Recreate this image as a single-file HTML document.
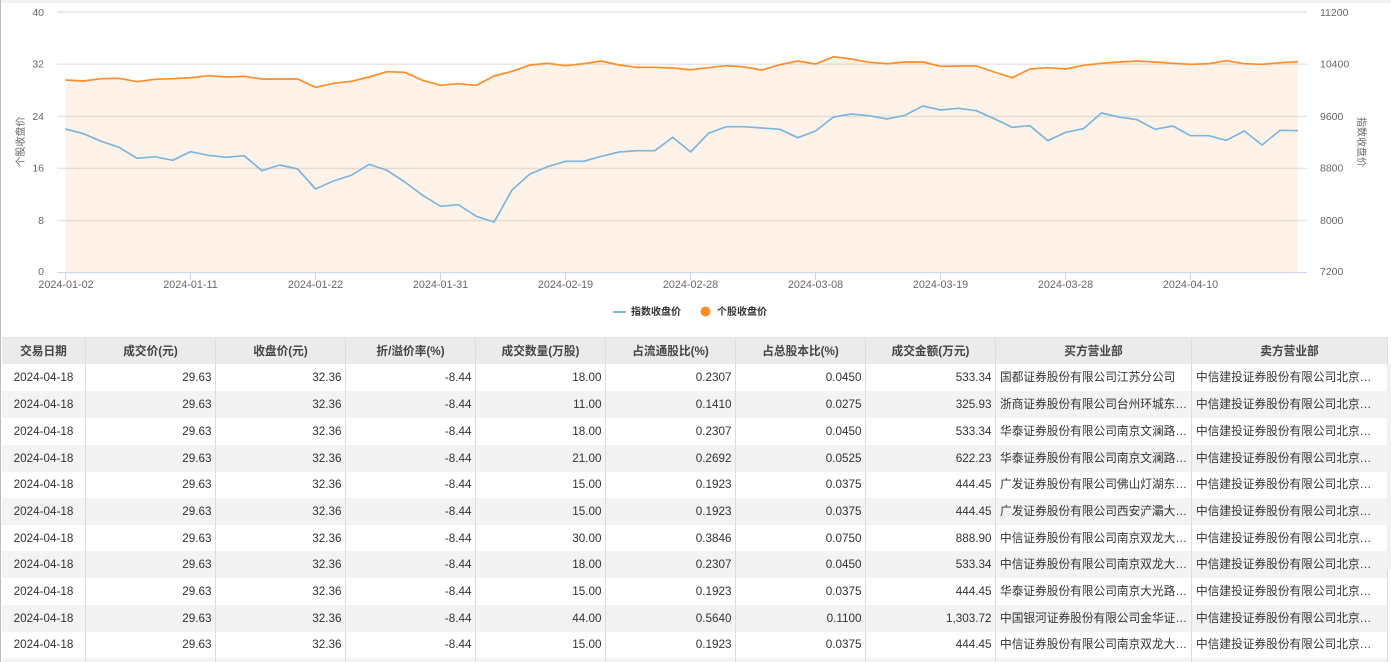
<!DOCTYPE html>
<html lang="zh-CN"><head><meta charset="utf-8"><title>大宗交易</title>
<style>
html,body{margin:0;padding:0;width:1391px;height:662px;overflow:hidden;background:#fff}
body{position:relative;font-family:"Liberation Sans","Noto Sans CJK SC",sans-serif;color:#333}
#top{position:absolute;left:0;top:0;width:1391px;height:3px;background:#f2f2f2}
#left{position:absolute;left:0;top:0;width:1px;height:662px;background:#bdbdbd}
svg{position:absolute;left:0;top:0}
svg text{font-family:"Liberation Sans","Noto Sans CJK SC",sans-serif}
.row{position:absolute;left:2px;width:1386px;display:grid;grid-template-columns:84px 130px 130px 130px 130px 130px 130px 130px 196px 196px;font-size:11.7px;color:#333}
.row>div{box-sizing:border-box;padding:0 3.5px;white-space:nowrap;overflow:hidden;text-align:right;border-right:1px solid #dcdcdc}
.row>div:first-child{text-align:center;padding:0}
.row>div:nth-child(9),.row>div:nth-child(10){text-align:left;padding-left:4px;padding-right:0}
.s{background:#f3f3f3}
.hd{background:#ebebeb;top:337px;height:27px;line-height:27px;font-weight:bold;color:#444;border-top:1px solid #e2e2e2;box-sizing:border-box}
.hd>div,.hd>div:nth-child(9),.hd>div:nth-child(10){text-align:center;padding:0}
.r{height:27px;line-height:28px}
#sb{position:absolute;left:1387px;top:364px;width:4px;height:206px;background:#f1f1f1;border-radius:0 0 2px 2px}
</style></head><body>
<div id="top"></div><div id="left"></div>
<svg width="1391" height="330" viewBox="0 0 1391 330">
<g stroke="#e4e4e4" stroke-width="1.4" fill="none">
<path d="M57 12H1307M57 64.2H1307M57 116.4H1307M57 168.4H1307M57 220.6H1307"/>
</g>
<polygon fill="#ff8d28" fill-opacity=".1" points="65.5,272 65.5,80 83.4,81 101.2,78.7 119.1,78.3 136.9,81.7 154.8,79.3 172.7,78.7 190.5,77.7 208.4,75.7 226.2,77 244.1,76.3 262,79 279.8,79 297.7,79 315.5,87.3 333.4,83.3 351.3,81.3 369.1,77 387,71.7 404.8,72.3 422.7,80.3 440.6,85.3 458.4,83.7 476.3,85.3 494.1,76 512,71.3 529.9,65 547.7,63.3 565.6,65.7 583.4,63.7 601.3,61 619.2,65 637,67.3 654.9,67.3 672.7,68 690.6,69.7 708.5,67.7 726.3,65.7 744.2,67 762,70 779.9,64.7 797.8,61 815.6,64 833.5,56.7 851.3,59 869.2,62.3 887.1,63.7 904.9,62 922.8,62 940.6,66.3 958.5,66 976.4,66 994.2,72 1012.1,77.7 1029.9,69 1047.8,67.7 1065.7,69 1083.5,65.3 1101.4,63.3 1119.2,62 1137.1,61 1155,62 1172.8,63.3 1190.7,64.3 1208.5,63.7 1226.4,60.7 1244.3,63.7 1262.1,64.3 1280,62.7 1297.9,61.7 1297.9,272"/>
<path d="M57 272.5H1307M65.5 272V280M190.5 272V280M315.5 272V280M440.5 272V280M565.5 272V280M690.5 272V280M815.5 272V280M940.5 272V280M1065.5 272V280M1190.5 272V280" stroke="#ccd6eb" stroke-width="1" fill="none"/>
<polyline fill="none" stroke="#7cb5de" stroke-width="1.7" stroke-linejoin="round" points="65.5,129 83.4,133.7 101.2,141.3 119.1,147.3 136.9,158.3 154.8,156.7 172.7,160.3 190.5,151.7 208.4,155.3 226.2,157.3 244.1,155.7 262,170.7 279.8,165 297.7,169 315.5,189 333.4,181 351.3,175.3 369.1,164.3 387,170.3 404.8,182 422.7,195.3 440.6,206.3 458.4,204.7 476.3,216.3 494.1,222 512,190 529.9,174 547.7,166.7 565.6,161.3 583.4,161.3 601.3,156.3 619.2,152 637,150.7 654.9,150.7 672.7,137.3 690.6,152 708.5,133.3 726.3,126.7 744.2,126.7 762,128 779.9,129.3 797.8,137.7 815.6,131 833.5,117 851.3,114 869.2,115.7 887.1,119 904.9,115.3 922.8,106 940.6,110 958.5,108.3 976.4,110.7 994.2,118.7 1012.1,127.3 1029.9,125.7 1047.8,140.7 1065.7,132.3 1083.5,128.7 1101.4,113 1119.2,117 1137.1,119.7 1155,129.3 1172.8,126 1190.7,135.7 1208.5,135.7 1226.4,140.3 1244.3,131 1262.1,145 1280,130.3 1297.9,130.7"/>
<polyline fill="none" stroke="#ff8d28" stroke-width="1.7" stroke-linejoin="round" points="65.5,80 83.4,81 101.2,78.7 119.1,78.3 136.9,81.7 154.8,79.3 172.7,78.7 190.5,77.7 208.4,75.7 226.2,77 244.1,76.3 262,79 279.8,79 297.7,79 315.5,87.3 333.4,83.3 351.3,81.3 369.1,77 387,71.7 404.8,72.3 422.7,80.3 440.6,85.3 458.4,83.7 476.3,85.3 494.1,76 512,71.3 529.9,65 547.7,63.3 565.6,65.7 583.4,63.7 601.3,61 619.2,65 637,67.3 654.9,67.3 672.7,68 690.6,69.7 708.5,67.7 726.3,65.7 744.2,67 762,70 779.9,64.7 797.8,61 815.6,64 833.5,56.7 851.3,59 869.2,62.3 887.1,63.7 904.9,62 922.8,62 940.6,66.3 958.5,66 976.4,66 994.2,72 1012.1,77.7 1029.9,69 1047.8,67.7 1065.7,69 1083.5,65.3 1101.4,63.3 1119.2,62 1137.1,61 1155,62 1172.8,63.3 1190.7,64.3 1208.5,63.7 1226.4,60.7 1244.3,63.7 1262.1,64.3 1280,62.7 1297.9,61.7"/>
<g font-size="10.5" fill="#666" text-anchor="end">
<text x="44" y="16">40</text><text x="44" y="67.5">32</text><text x="44" y="120">24</text><text x="44" y="171.5">16</text><text x="44" y="224">8</text><text x="44" y="275">0</text>
</g>
<g font-size="10.5" fill="#666">
<text x="1320" y="16">11200</text><text x="1320" y="67.5">10400</text><text x="1320" y="120">9600</text><text x="1320" y="171.5">8800</text><text x="1320" y="224">8000</text><text x="1320" y="275">7200</text>
</g>
<g font-size="10.8" fill="#666" text-anchor="middle">
<text x="66" y="288">2024-01-02</text><text x="190.5" y="288">2024-01-11</text><text x="315.5" y="288">2024-01-22</text><text x="440.5" y="288">2024-01-31</text><text x="565.5" y="288">2024-02-19</text><text x="690.5" y="288">2024-02-28</text><text x="815.5" y="288">2024-03-08</text><text x="940.5" y="288">2024-03-19</text><text x="1065.5" y="288">2024-03-28</text><text x="1190.5" y="288">2024-04-10</text>
</g>
<text font-size="10" fill="#666" text-anchor="middle" transform="translate(24 141.5) rotate(-90)">个股收盘价</text>
<text font-size="10" fill="#666" text-anchor="middle" transform="translate(1358 142) rotate(90)">指数收盘价</text>
<path d="M613 312H626" stroke="#7cb5de" stroke-width="2"/>
<circle cx="705.5" cy="311.5" r="5" fill="#ff8d28"/>
<text x="631" y="315" font-size="10" font-weight="bold" fill="#333">指数收盘价</text>
<text x="717" y="315" font-size="10" font-weight="bold" fill="#333">个股收盘价</text>
</svg>

<div class="row hd"><div>交易日期</div><div>成交价(元)</div><div>收盘价(元)</div><div>折/溢价率(%)</div><div>成交数量(万股)</div><div>占流通股比(%)</div><div>占总股本比(%)</div><div>成交金额(万元)</div><div>买方营业部</div><div>卖方营业部</div></div>

<div class="row r" style="top:364px"><div>2024-04-18</div><div>29.63</div><div>32.36</div><div>-8.44</div><div>18.00</div><div>0.2307</div><div>0.0450</div><div>533.34</div><div>国都证券股份有限公司江苏分公司</div><div>中信建投证券股份有限公司北京…</div></div>
<div class="row r s" style="top:391px"><div>2024-04-18</div><div>29.63</div><div>32.36</div><div>-8.44</div><div>11.00</div><div>0.1410</div><div>0.0275</div><div>325.93</div><div>浙商证券股份有限公司台州环城东…</div><div>中信建投证券股份有限公司北京…</div></div>
<div class="row r" style="top:418px"><div>2024-04-18</div><div>29.63</div><div>32.36</div><div>-8.44</div><div>18.00</div><div>0.2307</div><div>0.0450</div><div>533.34</div><div>华泰证券股份有限公司南京文澜路…</div><div>中信建投证券股份有限公司北京…</div></div>
<div class="row r s" style="top:445px"><div>2024-04-18</div><div>29.63</div><div>32.36</div><div>-8.44</div><div>21.00</div><div>0.2692</div><div>0.0525</div><div>622.23</div><div>华泰证券股份有限公司南京文澜路…</div><div>中信建投证券股份有限公司北京…</div></div>
<div class="row r" style="top:471px"><div>2024-04-18</div><div>29.63</div><div>32.36</div><div>-8.44</div><div>15.00</div><div>0.1923</div><div>0.0375</div><div>444.45</div><div>广发证券股份有限公司佛山灯湖东…</div><div>中信建投证券股份有限公司北京…</div></div>
<div class="row r s" style="top:498px"><div>2024-04-18</div><div>29.63</div><div>32.36</div><div>-8.44</div><div>15.00</div><div>0.1923</div><div>0.0375</div><div>444.45</div><div>广发证券股份有限公司西安浐灞大…</div><div>中信建投证券股份有限公司北京…</div></div>
<div class="row r" style="top:525px"><div>2024-04-18</div><div>29.63</div><div>32.36</div><div>-8.44</div><div>30.00</div><div>0.3846</div><div>0.0750</div><div>888.90</div><div>中信证券股份有限公司南京双龙大…</div><div>中信建投证券股份有限公司北京…</div></div>
<div class="row r s" style="top:551px"><div>2024-04-18</div><div>29.63</div><div>32.36</div><div>-8.44</div><div>18.00</div><div>0.2307</div><div>0.0450</div><div>533.34</div><div>中信证券股份有限公司南京双龙大…</div><div>中信建投证券股份有限公司北京…</div></div>
<div class="row r" style="top:578px"><div>2024-04-18</div><div>29.63</div><div>32.36</div><div>-8.44</div><div>15.00</div><div>0.1923</div><div>0.0375</div><div>444.45</div><div>华泰证券股份有限公司南京大光路…</div><div>中信建投证券股份有限公司北京…</div></div>
<div class="row r s" style="top:605px"><div>2024-04-18</div><div>29.63</div><div>32.36</div><div>-8.44</div><div>44.00</div><div>0.5640</div><div>0.1100</div><div>1,303.72</div><div>中国银河证券股份有限公司金华证…</div><div>中信建投证券股份有限公司北京…</div></div>
<div class="row r" style="top:631px"><div>2024-04-18</div><div>29.63</div><div>32.36</div><div>-8.44</div><div>15.00</div><div>0.1923</div><div>0.0375</div><div>444.45</div><div>中信证券股份有限公司南京双龙大…</div><div>中信建投证券股份有限公司北京…</div></div>
<div class="row r s" style="top:658px;height:4px"><div></div><div></div><div></div><div></div><div></div><div></div><div></div><div></div><div></div><div></div></div>
<div id="sb"></div>
</body></html>
